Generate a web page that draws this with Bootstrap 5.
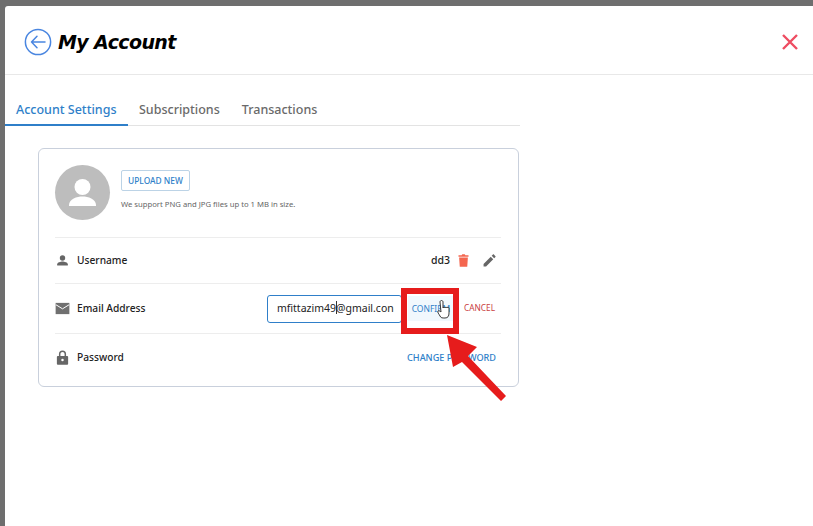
<!DOCTYPE html>
<html lang="en">
<head>
<meta charset="utf-8">
<title>My Account</title>
<link href="https://cdn.jsdelivr.net/npm/bootstrap@5.3.0/dist/css/bootstrap.min.css" rel="stylesheet">
<style>
html,body{height:100%;margin:0;overflow:hidden}
body{background:#6e6e6e;font-family:"Noto Sans",sans-serif;color:#212121;position:relative}
.shell{height:520px;margin:6px 0 0 5px;background:#fff;border-radius:3px 0 0 0}
.head{height:69px;border-bottom:1px solid #e8e8e8;padding:4px 14px 0 19px}
.back-ic{width:28px;height:28px;display:block}
.ttl{font-family:"DejaVu Sans",sans-serif;font-weight:700;font-style:italic;font-size:19px;letter-spacing:-.6px;color:#000;margin:0 0 0 6px;line-height:1}
.close-ic{width:18px;height:18px;display:block}
.tabbar{width:515px;margin-top:17px;height:34px;border-bottom:1px solid #e3e3e3}
.tabitem{font-size:12.5px;font-weight:500;line-height:20px;color:#6a6a6a;padding:8px 11px 5px;margin-bottom:-1px;white-space:nowrap}
.tabitem.on{color:#2f7fc9;border-bottom:2px solid #2f7fc9;padding-bottom:4px;padding-right:11.5px}
.box{width:481px;height:239px;margin:22px 0 0 33px;border:1px solid #c9d0dc;border-radius:6px;padding:16px 17px 0 16px}
.avatar{width:55px;height:55px;border-radius:50%;background:#bdbdbd;flex:none;display:block}
.upltext{margin-left:11px}
.upl{font-size:8.4px;font-weight:500;line-height:1;color:#2f7fc9;border:1px solid #bcd3e6;border-radius:2px;background:#fff;padding:6px 6px;height:21px;width:69px;margin-top:5px;white-space:nowrap}
.hint{font-size:7.7px;color:#666;margin:8px 0 0;line-height:10px}
.toprow{height:73px;border-bottom:1px solid #ededed}
.line{border-bottom:1px solid #ededed;font-size:10.2px;font-weight:500;color:#222}
.line.l1{height:46px}
.line.l2{height:50px}
.line.l3{height:47px;border-bottom:0}
.lab{width:15px;height:15px;display:block;margin-right:7px;flex:none}
.val{font-weight:500;font-size:10.5px;margin-right:6px}
.ac{width:15px;height:15px;display:block}
.acgap{margin-left:11px;margin-right:4px}
.mailin{width:135px;height:28px;border:1.5px solid #2f7fc9;border-radius:3px;font-size:10.5px;font-weight:400;padding:0 0 0 9px;color:#222;line-height:25px;overflow:hidden;white-space:nowrap;background:#fff;margin-right:6px}
.caret{display:inline-block;width:1px;height:13px;background:#333;vertical-align:-2px;margin:0 -1px 0 0}
.conf{font-size:8.5px;font-weight:400;color:#2f7fc9;background:#f1f8fd;width:46px;height:25px;line-height:25px;text-align:center}
.canc{font-size:8.3px;font-weight:400;color:#c9403f;margin:0 6px 0 10px}
.chg{font-size:9.15px;font-weight:500;color:#2f7fc9;margin-right:5px}
.overlay{position:absolute;left:0;top:0;width:813px;height:526px;pointer-events:none}
</style>
</head>
<body>
<div class="shell">
  <div class="head d-flex align-items-center">
    <svg class="back-ic" viewBox="0 0 28 28" fill="none" stroke="#4a86e0" stroke-width="1.5"><circle cx="14" cy="14" r="12.6"/><path d="M21 14H7.500M13 8.200 7.500 14l5.500 5.800" stroke-linecap="round" stroke-linejoin="round"/></svg>
    <h1 class="ttl">My Account</h1>
    <svg class="close-ic ms-auto" viewBox="0 0 18 18" fill="none" stroke="#ee4d62" stroke-width="2.400"><path d="M2 2 16 16M16 2 2 16"/></svg>
  </div>
  <div class="tabbar d-flex">
    <div class="tabitem on">Account Settings</div>
    <div class="tabitem">Subscriptions</div>
    <div class="tabitem">Transactions</div>
  </div>
  <div class="box">
    <div class="toprow d-flex">
      <svg class="avatar" viewBox="0 0 55 55"><circle cx="27.500" cy="22" r="8" fill="#fff"/><path d="M14 40c0-6 8-8.500 13.500-8.500S41 34 41 40v1H14z" fill="#fff"/></svg>
      <div class="upltext flex-grow-1">
        <button type="button" class="upl d-block">UPLOAD NEW</button>
        <p class="hint">We support PNG and JPG files up to 1 MB in size.</p>
      </div>
    </div>
    <div class="line l1 d-flex align-items-center">
      <svg class="lab" viewBox="0 0 24 24" fill="#666"><circle cx="12" cy="8" r="4.300"/><path d="M3.500 20v-2c0-3 5.500-4.500 8.500-4.500s8.500 1.500 8.500 4.500v2z"/></svg>
      <span>Username</span>
      <span class="val ms-auto">dd3</span>
      <svg class="ac" viewBox="0 0 24 24" fill="#f4664f"><path d="M5 7h14l-1 15H6zM4 3.500h5L10 2h4l1 1.500h5V6H4z"/></svg>
      <svg class="ac acgap" viewBox="0 0 24 24" fill="#666"><path d="M2.500 17.500V21.500h4L18 10l-4-4zM15.500 4.500l4 4 2-2c.5-.5.5-1 0-1.500l-2.500-2.500c-.5-.5-1-.5-1.500 0z"/></svg>
    </div>
    <div class="line l2 d-flex align-items-center">
      <svg class="lab" viewBox="0 0 24 24"><path fill="#707070" d="M1 3h22v18H1z"/><path d="M1.500 6 12 12.500 22.500 6" fill="none" stroke="#fff" stroke-width="1.600"/></svg>
      <span>Email Address</span>
      <div class="mailin ms-auto">mfittazim49<span class="caret"></span>@gmail.con</div>
      <span class="conf">CONFIRM</span>
      <span class="canc">CANCEL</span>
    </div>
    <div class="line l3 d-flex align-items-center">
      <svg class="lab" viewBox="0 0 24 24"><path fill="none" stroke="#666" stroke-width="2.400" d="M7.500 11V6.500a4.500 4.500 0 0 1 9 0V11"/><rect x="3" y="9.500" width="18" height="14" rx="1.500" fill="#666"/><circle cx="12" cy="16" r="2" fill="#fff"/></svg>
      <span>Password</span>
      <span class="chg ms-auto">CHANGE PASSWORD</span>
    </div>
  </div>
</div>
<svg class="overlay" viewBox="0 0 813 526">
  <rect x="404" y="291" width="52" height="40" fill="none" stroke="#e61c1c" stroke-width="6"/>
  <path d="M447 335 477 347 468 356 506 396 501 401 462 362 453 367z" fill="#e61c1c"/>
  <path d="M440 302l1 10c0 0-2-2-3-1s1 3 2 5 2 2 5 2 4-2 4-5v-5c0-1-2-1-2 0 0-1-2-1-2 0 0-1-2-1-2 0v-6c0-2-3-2-3 0z" fill="#fff" stroke="#222" stroke-width=".9"/>
</svg>
</body>
</html>
